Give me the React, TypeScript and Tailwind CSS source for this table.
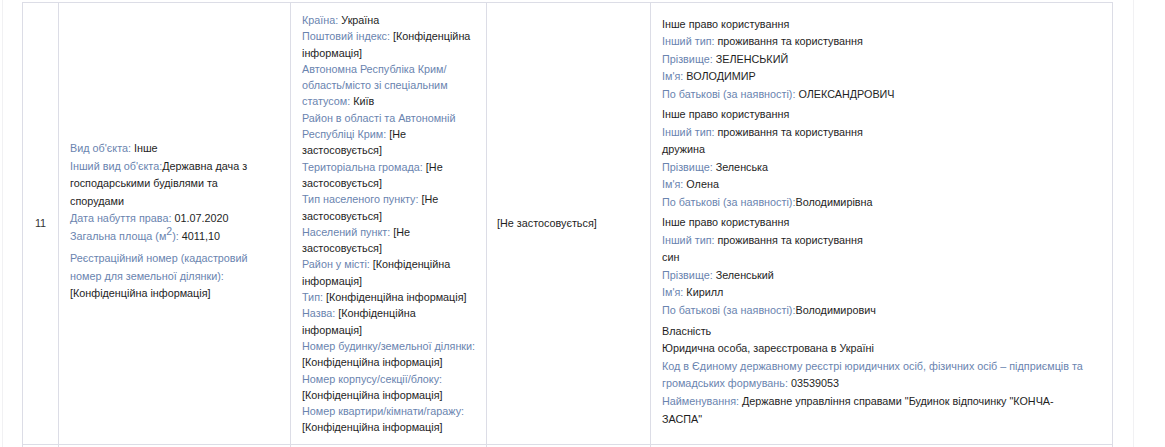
import React from 'react';

const L: React.FC<{ children: React.ReactNode }> = ({ children }) => (
  <span className="text-[#6a84af]">{children}</span>
);

const conf = '[Конфіденційна інформація]';
const na = '[Не застосовується]';

const addressRows: [string, string][] = [
  ['Країна:', 'Україна'],
  ['Поштовий індекс:', conf],
  ['Автономна Республіка Крим/ область/місто зі спеціальним статусом:', 'Київ'],
  ['Район в області та Автономній Республіці Крим:', na],
  ['Територіальна громада:', na],
  ['Тип населеного пункту:', na],
  ['Населений пункт:', na],
  ['Район у місті:', conf],
  ['Тип:', conf],
  ['Назва:', conf],
  ['Номер будинку/земельної ділянки:', conf],
  ['Номер корпусу/секції/блоку:', conf],
  ['Номер квартири/кімнати/гаражу:', conf],
];

interface Person {
  relation?: string;
  surname: string;
  name: string;
  patronymic: string;
  tight?: boolean;
}

const persons: Person[] = [
  { surname: 'ЗЕЛЕНСЬКИЙ', name: 'ВОЛОДИМИР', patronymic: 'ОЛЕКСАНДРОВИЧ' },
  { relation: 'дружина', surname: 'Зеленська', name: 'Олена', patronymic: 'Володимирівна', tight: true },
  { relation: 'син', surname: 'Зеленський', name: 'Кирилл', patronymic: 'Володимирович', tight: true },
];

export default function App() {
  return (
    <div className="h-[447px] overflow-hidden bg-white font-['Liberation_Sans',Arial,sans-serif] text-[10.8px] text-[#1e1e1e]">
      <div className="ml-[2px] h-full w-[1132px] border-x border-[#f1f1f3] pl-[19px] pt-[2px]">
        <div className="flex w-[1091px] border-t border-[#dcdde6]">
          <div className="flex w-[36px] items-center justify-center border-l border-[#dcdde6] leading-[17.6px] text-[#333]">
            11
          </div>

          <div className="flex w-[232px] flex-col justify-center border-l border-[#dcdde6] pb-[4px] pl-[11px] pr-[34px] leading-[17.6px]">
            <div>
              <L>Вид об'єкта:</L> Інше
            </div>
            <div>
              <L>Інший вид об'єкта:</L>Державна дача з господарськими будівлями та спорудами
            </div>
            <div>
              <L>Дата набуття права:</L> 01.07.2020
            </div>
            <div>
              <L>
                Загальна площа (м<span className="relative -top-[5px] text-[10.5px] leading-none">2</span>):
              </L>{' '}
              4011,10
            </div>
            <div className="mt-[4.5px]">
              <L>Реєстраційний номер (кадастровий номер для земельної ділянки):</L> {conf}
            </div>
          </div>

          <div className="w-[196px] border-l border-[#dcdde6] pb-[8px] pl-[11px] pr-[10px] pt-[9px] leading-[16.3px]">
            {addressRows.map(([label, value]) => (
              <div key={label}>
                <L>{label}</L> {value}
              </div>
            ))}
          </div>

          <div className="flex w-[164px] items-center border-l border-[#dcdde6] px-[10px] leading-[17.6px]">
            {na}
          </div>

          <div className="flex w-[463px] flex-col justify-center border-x border-[#dcdde6] pb-[3px] pl-[11px] pr-[24px] leading-[17.6px]">
            {persons.map((p, i) => (
              <div key={i} className={i > 0 ? 'mt-[2.5px]' : ''}>
                <div>Інше право користування</div>
                <div>
                  <L>Інший тип:</L> проживання та користування
                </div>
                {p.relation && <div>{p.relation}</div>}
                <div>
                  <L>Прізвище:</L> {p.surname}
                </div>
                <div>
                  <L>Ім'я:</L> {p.name}
                </div>
                <div>
                  <L>По батькові (за наявності):</L>
                  {p.tight ? '' : ' '}
                  {p.patronymic}
                </div>
              </div>
            ))}
            <div className="mt-[3px]">
              <div>Власність</div>
              <div>Юридична особа, зареєстрована в Україні</div>
              <div>
                <L>Код в Єдиному державному реєстрі юридичних осіб, фізичних осіб – підприємців та громадських формувань:</L>{' '}
                03539053
              </div>
              <div>
                <L>Найменування:</L> Державне управління справами "Будинок відпочинку "КОНЧА-ЗАСПА"
              </div>
            </div>
          </div>
        </div>

        <div className="flex h-[40px] w-[1091px] border-t border-[#dcdde6]">
          <div className="w-[36px] border-l border-[#dcdde6]" />
          <div className="w-[232px] border-l border-[#dcdde6]" />
          <div className="w-[196px] border-l border-[#dcdde6]" />
          <div className="w-[164px] border-l border-[#dcdde6]" />
          <div className="w-[463px] border-x border-[#dcdde6]" />
        </div>
      </div>
    </div>
  );
}
